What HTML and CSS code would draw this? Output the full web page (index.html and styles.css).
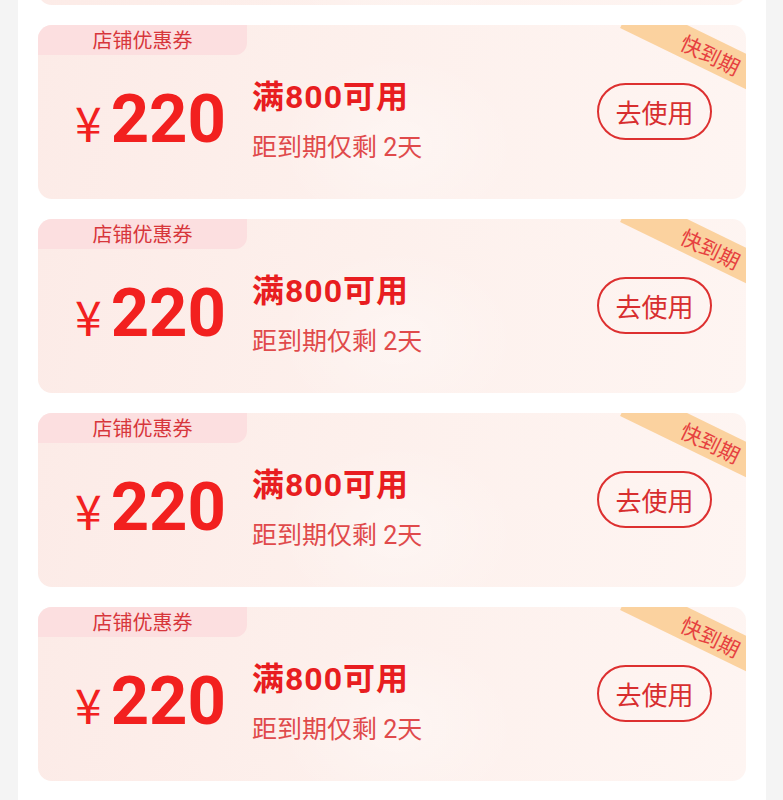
FILE: index.html
```html
<!DOCTYPE html>
<html lang="zh-CN">
<head>
<meta charset="utf-8">
<title>店铺优惠券</title>
<link rel="stylesheet" href="styles.css">
</head>
<body>
<div class="panel">
  <div class="list">
    <div class="card">
      <div class="tag">店铺优惠券</div>
      <div class="ribbon">快到期</div>
      <div class="row">
        <div class="amount"><span class="yen">¥</span><span class="num">220</span></div>
        <div class="info"><div class="title">满800可用</div><div class="sub">距到期仅剩 2天</div></div>
        <div class="btn">去使用</div>
      </div>
    </div>
    <div class="card">
      <div class="tag">店铺优惠券</div>
      <div class="ribbon">快到期</div>
      <div class="row">
        <div class="amount"><span class="yen">¥</span><span class="num">220</span></div>
        <div class="info"><div class="title">满800可用</div><div class="sub">距到期仅剩 2天</div></div>
        <div class="btn">去使用</div>
      </div>
    </div>
    <div class="card">
      <div class="tag">店铺优惠券</div>
      <div class="ribbon">快到期</div>
      <div class="row">
        <div class="amount"><span class="yen">¥</span><span class="num">220</span></div>
        <div class="info"><div class="title">满800可用</div><div class="sub">距到期仅剩 2天</div></div>
        <div class="btn">去使用</div>
      </div>
    </div>
    <div class="card">
      <div class="tag">店铺优惠券</div>
      <div class="ribbon">快到期</div>
      <div class="row">
        <div class="amount"><span class="yen">¥</span><span class="num">220</span></div>
        <div class="info"><div class="title">满800可用</div><div class="sub">距到期仅剩 2天</div></div>
        <div class="btn">去使用</div>
      </div>
    </div>
    <div class="card">
      <div class="tag">店铺优惠券</div>
      <div class="ribbon">快到期</div>
      <div class="row">
        <div class="amount"><span class="yen">¥</span><span class="num">220</span></div>
        <div class="info"><div class="title">满800可用</div><div class="sub">距到期仅剩 2天</div></div>
        <div class="btn">去使用</div>
      </div>
    </div>
  </div>
</div>
</body>
</html>
```

FILE: styles.css
```css
html, body {
  margin: 0;
  padding: 0;
  background: #f4f4f4;
  height: 800px;
  overflow: hidden;
}
body {
  font-family: "Noto Sans CJK SC", "Noto Sans", sans-serif;
}
.panel {
  margin: 0 17px 0 18px;
  background: #ffffff;
  height: 800px;
  overflow: hidden;
  padding: 0 20px;
}
.list {
  display: flex;
  flex-direction: column;
  gap: 20px;
  margin-top: -169px;
}
.card {
  position: relative;
  height: 174px;
  border-radius: 14px;
  overflow: hidden;
  background:
    radial-gradient(ellipse 120px 90px at 360px 120px, rgba(255,255,255,0.35), rgba(255,255,255,0) 100%),
    linear-gradient(100deg, #fcebe7 0%, #fdf0ec 45%, #fef5f2 100%);
}
.tag {
  width: 209px;
  height: 30px;
  background: #fcdfe0;
  border-bottom-right-radius: 12px;
  color: #d7363b;
  font-size: 20px;
  line-height: 30px;
  text-align: center;
}
.ribbon {
  position: absolute;
  left: 580px;
  top: 12px;
  width: 180px;
  height: 32px;
  background: #fbd29f;
  color: #e6413f;
  font-size: 21px;
  line-height: 32px;
  text-align: center;
  transform: rotate(26deg);
  padding-left: 6px;
  box-sizing: border-box;
}
.row {
  display: flex;
  align-items: flex-start;
  padding-left: 37px;
}
.amount {
  width: 177px;
  margin-top: 31px;
  display: flex;
  align-items: baseline;
  line-height: 1;
  color: #f2201f;
  font-family: Roboto, "Liberation Sans", sans-serif;
}
.yen {
  font-family: "Noto Sans CJK SC", sans-serif;
  font-size: 48px;
  font-weight: 400;
  margin-right: 9px;
}
.num {
  font-size: 67px;
  font-weight: 700;
}
.info {
  margin-top: 24px;
  flex: 1;
}
.title {
  font-family: Roboto, "Noto Sans CJK SC", sans-serif;
  font-size: 32px;
  font-weight: 700;
  line-height: 36px;
  letter-spacing: 1px;
  color: #e81d20;
}
.sub {
  margin-top: 18px;
  font-family: Roboto, "Noto Sans CJK SC", sans-serif;
  font-size: 25px;
  line-height: 29px;
  color: #e04a4b;
}
.btn {
  margin-top: 28px;
  margin-right: 34px;
  width: 115px;
  height: 57px;
  box-sizing: border-box;
  border: 2px solid #dd3030;
  border-radius: 29px;
  display: flex;
  align-items: center;
  justify-content: center;
  color: #d82e2f;
  font-size: 26px;
}
```
